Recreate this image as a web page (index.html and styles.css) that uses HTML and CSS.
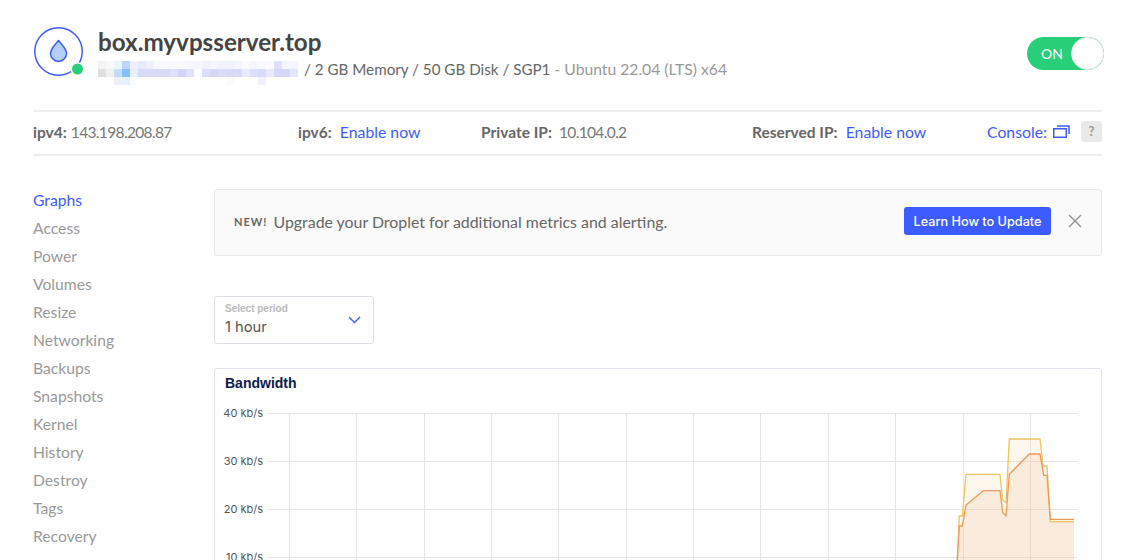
FILE: index.html
```html
<!DOCTYPE html>
<html lang="en">
<head>
<meta charset="utf-8">
<title>box.myvpsserver.top</title>
<link rel="stylesheet" href="styles.css">
</head>
<body>
<div class="page">
  <header class="head">
    <div class="logo">
      <svg width="52" height="52" viewBox="0 0 52 52">
        <circle cx="25.5" cy="25.5" r="23.7" fill="none" stroke="#3d5cff" stroke-width="1.5"/>
        <path d="M25.5 14.5c3 3.6 8 8 8 12.900a8 8 0 0 1-16 0c0-4.900 5-9.300 8-12.900z" fill="#b3cdff" stroke="#3d5cff" stroke-width="1.500" stroke-linejoin="round"/>
        <circle cx="44.500" cy="43" r="6.800" fill="#fff"/>
        <circle cx="44.500" cy="43" r="5.500" fill="#27cf78"/>
      </svg>
    </div>
    <div class="title">
      <h1>box.myvpsserver.top</h1>
      <div class="specs">
        <svg class="blur" width="200" height="24" viewBox="98 60 200 24" shape-rendering="crispEdges" aria-hidden="true">
          <rect x="98" y="60" width="8" height="8" fill="#f4f4f4"/><rect x="106" y="60" width="8" height="8" fill="#f8f8f8"/><rect x="114" y="60" width="8" height="8" fill="#e6f8fb"/><rect x="122" y="60" width="8" height="8" fill="#bfd5fb"/><rect x="130" y="60" width="8" height="8" fill="#eeeffe"/><rect x="138" y="60" width="8" height="8" fill="#e6e8fc"/><rect x="146" y="60" width="8" height="8" fill="#eef0fd"/><rect x="154" y="60" width="32" height="8" fill="#f8f9ff"/><rect x="186" y="60" width="8" height="8" fill="#f6f7fe"/><rect x="194" y="60" width="8" height="8" fill="#f4f5fe"/><rect x="202" y="60" width="8" height="8" fill="#f0f0fe"/><rect x="210" y="60" width="8" height="8" fill="#f4f5fe"/><rect x="218" y="60" width="16" height="8" fill="#f0f2fe"/><rect x="234" y="60" width="8" height="8" fill="#f4f5fe"/><rect x="242" y="60" width="8" height="8" fill="#fafaff"/><rect x="250" y="60" width="8" height="8" fill="#f6f6fe"/><rect x="258" y="60" width="8" height="8" fill="#f8f8ff"/><rect x="266" y="60" width="8" height="8" fill="#fafaff"/><rect x="274" y="60" width="8" height="8" fill="#e0e2fc"/><rect x="282" y="60" width="16" height="8" fill="#f4f5fe"/>
          <rect x="98" y="68" width="8" height="8" fill="#dfdfdf"/><rect x="106" y="68" width="8" height="8" fill="#f0f0f0"/><rect x="114" y="68" width="8" height="8" fill="#c6dbfb"/><rect x="122" y="68" width="8" height="8" fill="#86c0f8"/><rect x="130" y="68" width="8" height="8" fill="#e3f1fb"/><rect x="138" y="68" width="32" height="8" fill="#d8daf9"/><rect x="170" y="68" width="8" height="8" fill="#dfe0fb"/><rect x="178" y="68" width="8" height="8" fill="#d2d4fa"/><rect x="186" y="68" width="8" height="8" fill="#dfe0fb"/><rect x="194" y="68" width="8" height="8" fill="#fcfcff"/><rect x="202" y="68" width="8" height="8" fill="#dcdffb"/><rect x="210" y="68" width="8" height="8" fill="#d4d7fa"/><rect x="218" y="68" width="8" height="8" fill="#d9dcfb"/><rect x="226" y="68" width="16" height="8" fill="#d8dafa"/><rect x="242" y="68" width="8" height="8" fill="#e8e9fc"/><rect x="250" y="68" width="8" height="8" fill="#dcdffb"/><rect x="258" y="68" width="8" height="8" fill="#d8dbfb"/><rect x="266" y="68" width="8" height="8" fill="#e8e9fd"/><rect x="274" y="68" width="16" height="8" fill="#d4d6fa"/><rect x="290" y="68" width="8" height="8" fill="#e4e6fc"/>
          <rect x="114" y="76" width="8" height="8" fill="#eef0fe"/><rect x="122" y="76" width="8" height="8" fill="#e6f1fd"/><rect x="130" y="76" width="8" height="8" fill="#fcfeff"/><rect x="226" y="76" width="8" height="8" fill="#fafaff"/><rect x="258" y="76" width="8" height="8" fill="#f0f1fd"/>
        </svg>
        <span class="spec-main">/ 2 GB Memory / 50 GB Disk / SGP1</span>
        <span class="spec-os">- Ubuntu 22.04 (LTS) x64</span>
      </div>
    </div>
    <div class="toggle"><span>ON</span><i class="knob"></i></div>
  </header>

  <div class="info">
    <div class="cell c1"><b>ipv4:</b> <span class="num">143.198.208.87</span></div>
    <div class="cell c2"><b>ipv6:</b> <a>Enable now</a></div>
    <div class="cell c3"><b>Private IP:</b> <span class="num ip2">10.104.0.2</span></div>
    <div class="cell c4"><b>Reserved IP:</b> <a>Enable now</a></div>
    <div class="cell c5">
      <a>Console:</a>
      <svg width="17" height="13" viewBox="0 0 17 13"><rect x="0.750" y="3.750" width="12.500" height="8.500" fill="none" stroke="#3d5cff" stroke-width="1.500"/><path d="M4 1h12v8" fill="none" stroke="#3d5cff" stroke-width="1.500"/></svg>
      <span class="help">?</span>
    </div>
  </div>

  <div class="body">
    <nav class="side">
      <a class="active">Graphs</a>
      <a>Access</a>
      <a>Power</a>
      <a>Volumes</a>
      <a>Resize</a>
      <a>Networking</a>
      <a>Backups</a>
      <a>Snapshots</a>
      <a>Kernel</a>
      <a>History</a>
      <a>Destroy</a>
      <a>Tags</a>
      <a>Recovery</a>
    </nav>
    <main class="main">
      <div class="notice">
        <span class="new">NEW!</span>
        <span class="msg">Upgrade your Droplet for additional metrics and alerting.</span>
        <button class="learn">Learn How to Update</button>
        <svg class="close" width="14" height="14" viewBox="0 0 14 14"><path d="M1 1l12 12M13 1L1 13" stroke="#8e8e8e" stroke-width="1.300" fill="none"/></svg>
      </div>
      <div class="select">
        <div class="sel-text">
          <small>Select period</small>
          <span>1 hour</span>
        </div>
        <svg width="13" height="8" viewBox="0 0 13 8"><path d="M1 1l5.500 5.500L12 1" fill="none" stroke="#3d5cff" stroke-width="1.400"/></svg>
      </div>
      <section class="chart">
        <h2>Bandwidth</h2>
        <svg class="plot" width="886" height="200" viewBox="215 392 886 200">
          <g stroke="#e6e6e6" stroke-width="1">
            <path d="M268 413.500H1077M268 461.500H1077M268 509.500H1077M268 557.500H1077"/>
            <path d="M289.500 413V600M356.500 413V600M424.500 413V600M491.500 413V600M558.500 413V600M626.500 413V600M693.500 413V600M760.500 413V600M828.500 413V600M895.500 413V600M963.500 413V600M1030.500 413V600"/>
          </g>
          <g class="ylab">
            <text x="263" y="417" text-anchor="end">40 kb/s</text>
            <text x="263" y="465" text-anchor="end">30 kb/s</text>
            <text x="263" y="513" text-anchor="end">20 kb/s</text>
            <text x="263" y="561" text-anchor="end">10 kb/s</text>
          </g>
          <path d="M957.300 600V560L959.300 516H962.300L966 474.300H1000L1002.700 500L1006 502.700L1009.300 439H1040L1043 466H1047L1050.300 521.700H1074V600Z" fill="#f5d9a8" fill-opacity=".2"/>
          <path d="M957.300 600V560L959.300 526H962.300L966 505L983.300 490.700H1000L1002.700 512.700L1006 515.700L1009.300 474.300L1029.300 454H1040L1043.700 475.300H1047L1050.300 519.300H1074V600Z" fill="#f2be96" fill-opacity=".2"/>
          <path d="M957.300 560L959.300 516H962.300L966 474.300H1000L1002.700 500L1006 502.700L1009.300 439H1040L1043 466H1047L1050.300 521.700H1074" fill="none" stroke="#eec35f" stroke-width="1.300"/>
          <path d="M957.300 600V560L959.300 526H962.300L966 505L983.300 490.700H1000L1002.700 512.700L1006 515.700L1009.300 474.300L1029.300 454H1040L1043.700 475.300H1047L1050.300 519.300H1074" fill="none" stroke="#ee9a55" stroke-width="1.300"/>
        </svg>
      </section>
    </main>
  </div>
</div>
</body>
</html>
```

FILE: styles.css
```css
* { box-sizing: border-box; }
html, body { margin: 0; height: 100%; overflow: hidden; background: #fff; }
body { font-family: "Lato", "Liberation Sans", sans-serif; color: #666; font-size: 16px; }
a { color: #3d5cff; }
.page { padding: 26px 26px 0 33px; width: 1128px; height: 560px; overflow: hidden; }

.head { display: flex; align-items: flex-start; height: 84px; }
.logo { width: 65px; height: 52px; flex: none; }
.title { flex: 1; padding-top: 2px; }
h1 { margin: 0; font-size: 24.2px; line-height: 28px; font-weight: 700; color: #444; }
.specs { display: flex; align-items: flex-start; height: 26px; margin-top: 1px; }
.blur { flex: none; margin: 4px 6px 0 0; }
.spec-main { color: #666; font-size: 15.2px; line-height: 24px; white-space: pre; }
.spec-os { color: #999; font-size: 15.7px; line-height: 24px; margin-left: 4px; }
.toggle { position: relative; width: 77px; height: 33px; margin: 11px -2px 0 0; background: #27cf78; border-radius: 17px; color: #fff; font-size: 14px; line-height: 33px; padding-left: 14px; }
.knob { position: absolute; right: 0; top: 0; width: 33px; height: 33px; background: #fff; border-radius: 50%; border: 1px solid #e9efec; }

.info { display: flex; align-items: center; height: 46px; padding-bottom: 3px; border-top: 2px solid #eee; border-bottom: 2px solid #eee; color: #777; }
.info b { font-size: 15.5px; font-weight: 700; color: #666; }
.info a { margin-left: 4px; font-size: 15.8px; }
.num { font-size: 15.500px; letter-spacing: -0.65px; }
.ip2 { margin-left: 3px; }
.cell { white-space: nowrap; }
.c1 { width: 265px; }
.c2 { width: 183px; }
.c3 { width: 271px; }
.c4 { width: 235px; }
.c5 { display: flex; align-items: center; flex: 1; }
.c5 a { margin: 0 6px 0 0; }
.help { width: 21px; height: 21px; margin-left: 11px; background: #e9e9e9; border-radius: 3px; color: #999; font-size: 13px; font-weight: 700; text-align: center; line-height: 21px; }

.body { display: flex; padding-top: 30px; }
.side { width: 181px; flex: none; display: flex; flex-direction: column; font-size: 15.7px; }
.side a { display: block; height: 28px; line-height: 28px; color: #999; }
.side a.active { color: #3d5cff; }
.main { flex: 1; padding-top: 3px; }
.notice { display: flex; align-items: center; height: 67px; padding: 0 20px 3px 19px; background: #fafafa; border: 1px solid #e9e9e9; border-radius: 3px; }
.new { font-size: 11px; font-weight: 700; letter-spacing: 1px; color: #666; margin-right: 6px; }
.msg { flex: 1; color: #666; font-size: 15.9px; }
.learn { height: 28px; width: 147px; padding: 0; background: #3d5cff; border: 0; border-radius: 3px; color: #fff; font: 500 12.700px "Inter", "Liberation Sans", sans-serif; }
.close { margin-left: 17px; margin-right: -1px; }

.select { display: flex; align-items: center; justify-content: space-between; width: 160px; height: 48px; margin-top: 40px; padding: 0 12px 0 10px; border: 1px solid #dcdfe6; border-radius: 3px; }
.sel-text { display: flex; flex-direction: column; }
.sel-text small { font: 700 10px/12px "Liberation Sans", sans-serif; color: #bbb; }
.sel-text span { font: 400 14.700px/20px "Inter", "Liberation Sans", sans-serif; color: #555; margin-top: 2px; }

.chart { position: relative; height: 260px; margin-top: 24px; border: 1px solid #dfe2ea; border-radius: 3px; padding: 6px 10px; }
h2 { margin: 0; font: 700 14px/16px "Liberation Sans", sans-serif; color: #0b1a4f; }
.plot { position: absolute; left: 0; top: 23px; display: block; }
.ylab text { font: 400 11px "Inter", "Liberation Sans", sans-serif; fill: #555; }
```
